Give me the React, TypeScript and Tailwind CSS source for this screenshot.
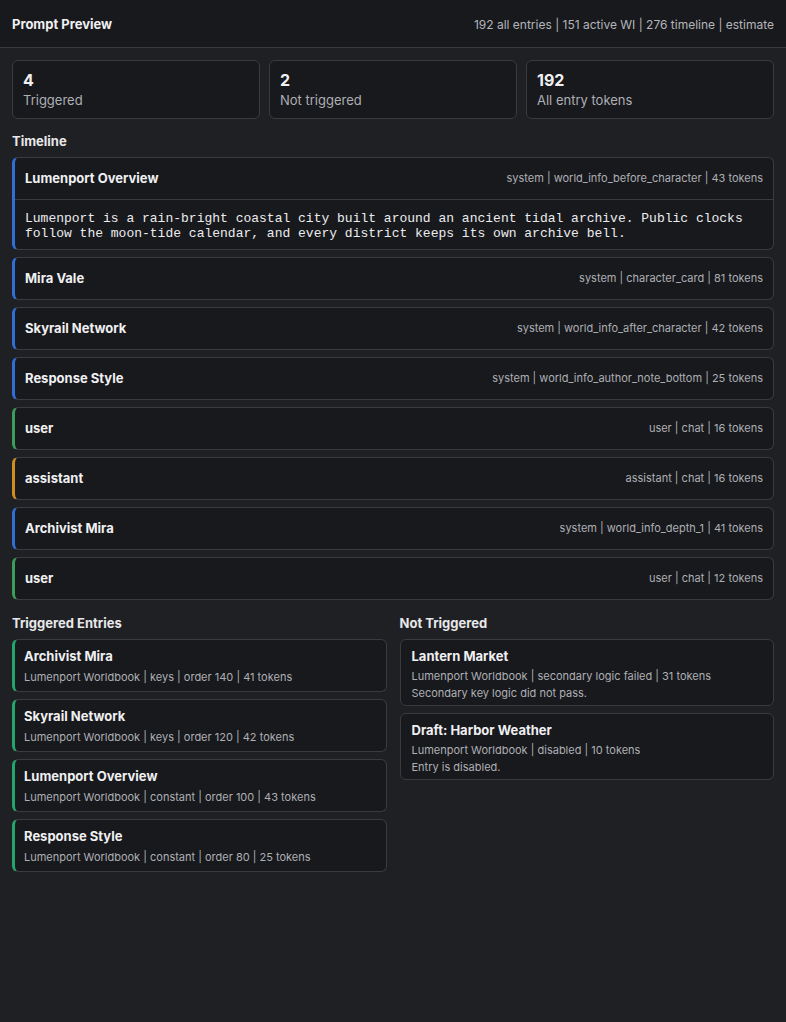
type TimelineItem = {
  title: string;
  meta: string;
  tone: 'blue' | 'green' | 'orange';
  body?: string;
};

const stats = [
  { value: '4', label: 'Triggered' },
  { value: '2', label: 'Not triggered' },
  { value: '192', label: 'All entry tokens' }
];

const timeline: TimelineItem[] = [
  {
    title: 'Lumenport Overview',
    meta: 'system | world_info_before_character | 43 tokens',
    tone: 'blue',
    body: 'Lumenport is a rain-bright coastal city built around an ancient tidal archive. Public clocks follow the moon-tide calendar, and every district keeps its own archive bell.'
  },
  { title: 'Mira Vale', meta: 'system | character_card | 81 tokens', tone: 'blue' },
  { title: 'Skyrail Network', meta: 'system | world_info_after_character | 42 tokens', tone: 'blue' },
  { title: 'Response Style', meta: 'system | world_info_author_note_bottom | 25 tokens', tone: 'blue' },
  { title: 'user', meta: 'user | chat | 16 tokens', tone: 'green' },
  { title: 'assistant', meta: 'assistant | chat | 16 tokens', tone: 'orange' },
  { title: 'Archivist Mira', meta: 'system | world_info_depth_1 | 41 tokens', tone: 'blue' },
  { title: 'user', meta: 'user | chat | 12 tokens', tone: 'green' }
];

const toneBorder = {
  blue: 'border-l-[#2f6fd6]',
  green: 'border-l-[#3c9d5a]',
  orange: 'border-l-[#d08d1f]'
};

const triggered = [
  { title: 'Archivist Mira', meta: 'Lumenport Worldbook | keys | order 140 | 41 tokens' },
  { title: 'Skyrail Network', meta: 'Lumenport Worldbook | keys | order 120 | 42 tokens' },
  { title: 'Lumenport Overview', meta: 'Lumenport Worldbook | constant | order 100 | 43 tokens' },
  { title: 'Response Style', meta: 'Lumenport Worldbook | constant | order 80 | 25 tokens' }
];

const notTriggered = [
  {
    title: 'Lantern Market',
    meta: 'Lumenport Worldbook | secondary logic failed | 31 tokens',
    reason: 'Secondary key logic did not pass.'
  },
  {
    title: 'Draft: Harbor Weather',
    meta: 'Lumenport Worldbook | disabled | 10 tokens',
    reason: 'Entry is disabled.'
  }
];

export default function App() {
  return (
    <div className="min-h-[1022px] bg-[#1f2024] text-[#e8e8ea] font-['Inter',sans-serif]">
      <header className="h-12 bg-[#18191d] border-b border-[#3a3b40] flex items-center justify-between px-3 pt-[3px]">
        <h1 className="text-[13px] font-bold text-[#f0f0f2]">Prompt Preview</h1>
        <p className="text-xs text-[#b4b5ba]">192 all entries | 151 active WI | 276 timeline | estimate</p>
      </header>

      <main className="px-3 pt-3">
        <div className="grid grid-cols-3 gap-[9px]">
          {stats.map((s) => (
            <div key={s.label} className="h-[59px] rounded-md border border-[#3a3b40] bg-[#18191d] px-[10px] pt-[9px]">
              <p className="text-base font-bold leading-5 text-[#f0f0f2]">{s.value}</p>
              <p className="text-[13px] leading-5 text-[#aeafb4]">{s.label}</p>
            </div>
          ))}
        </div>

        <h2 className="mt-[14px] mb-[7px] text-[13px] font-bold leading-[17px]">Timeline</h2>
        <div className="flex flex-col gap-[7px]">
          {timeline.map((t, i) => (
            <div
              key={i}
              className={`rounded-md border border-[#3a3b40] border-l-[3px] ${toneBorder[t.tone]} bg-[#18191d]`}
            >
              <div className="h-[41px] flex items-center justify-between px-[10px]">
                <span className="text-[13px] font-bold text-[#f0f0f2]">{t.title}</span>
                <span className="text-[11px] text-[#aeafb4]">{t.meta}</span>
              </div>
              {t.body && (
                <div className="border-t border-[#3a3b40] px-[10px] pt-[11px] pb-[8px] font-['Liberation_Mono',monospace] text-[13px] leading-[15px] text-[#ececee]">
                  {t.body}
                </div>
              )}
            </div>
          ))}
        </div>

        <div className="mt-[15px] grid grid-cols-2 gap-[13px]">
          <section>
            <h2 className="mb-[7px] text-[13px] font-bold leading-[17px]">Triggered Entries</h2>
            <div className="flex flex-col gap-[7px]">
              {triggered.map((e) => (
                <div
                  key={e.title}
                  className="h-[53px] rounded-md border border-[#3a3b40] border-l-[3px] border-l-[#24a36b] bg-[#18191d] pl-[9px] pt-[8px]"
                >
                  <p className="text-[13px] font-bold leading-[17px] text-[#f0f0f2]">{e.title}</p>
                  <p className="mt-[5px] text-[11px] leading-[14px] text-[#aeafb4]">{e.meta}</p>
                </div>
              ))}
            </div>
          </section>

          <section>
            <h2 className="mb-[7px] text-[13px] font-bold leading-[17px]">Not Triggered</h2>
            <div className="flex flex-col gap-[7px]">
              {notTriggered.map((e) => (
                <div
                  key={e.title}
                  className="h-[67px] rounded-md border border-[#3a3b40] bg-[#18191d] pl-[11px] pt-[8px]"
                >
                  <p className="text-[13px] font-bold leading-[17px] text-[#f0f0f2]">{e.title}</p>
                  <p className="mt-[3px] text-[11px] leading-[16px] text-[#aeafb4]">{e.meta}</p>
                  <p className="text-[11px] leading-[18px] text-[#aeafb4]">{e.reason}</p>
                </div>
              ))}
            </div>
          </section>
        </div>
      </main>
    </div>
  );
}
